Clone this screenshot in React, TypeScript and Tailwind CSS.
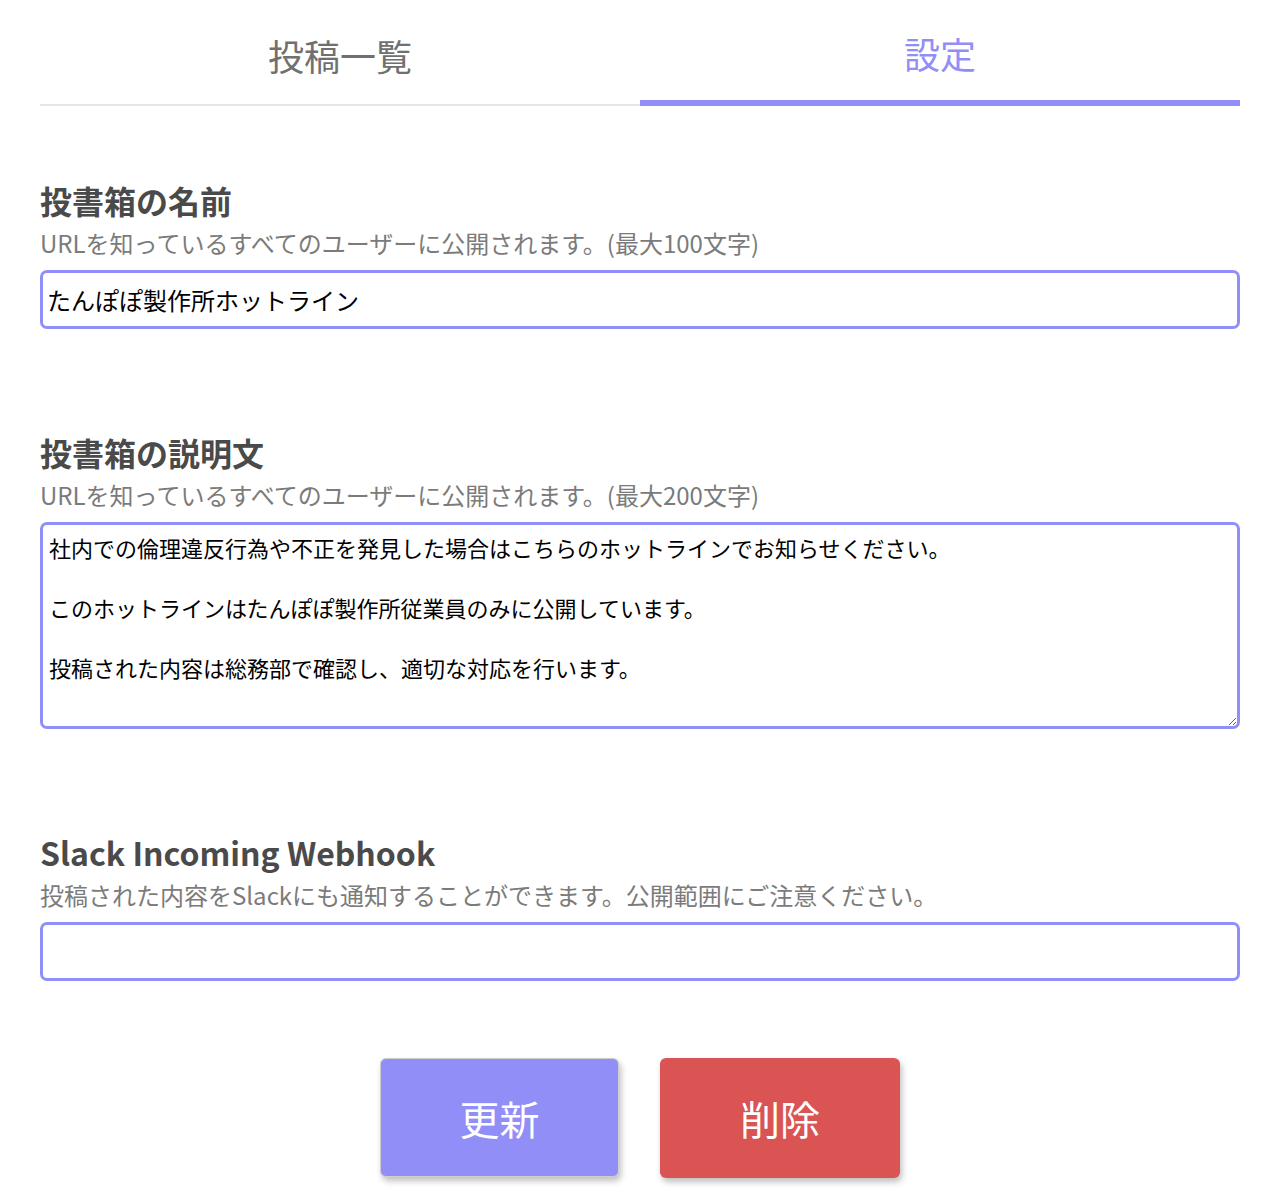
import React, { useState } from "react";

const jp = "font-['Noto_Sans_CJK_JP','Noto_Sans',sans-serif]";

const Field: React.FC<{ title: string; note: string; children: React.ReactNode }> = ({
  title,
  note,
  children,
}) => (
  <div>
    <h2 className="text-[32px] font-bold leading-[44px] text-[#4a4a4a]">{title}</h2>
    <p className="mt-[4px] text-[24px] leading-[34px] text-[#7b7b7b]">{note}</p>
    <div className="mt-[10px]">{children}</div>
  </div>
);

const App: React.FC = () => {
  const [tab, setTab] = useState<"list" | "settings">("settings");
  const [name, setName] = useState("たんぽぽ製作所ホットライン");
  const [desc, setDesc] = useState(
    "社内での倫理違反行為や不正を発見した場合はこちらのホットラインでお知らせください。\n\nこのホットラインはたんぽぽ製作所従業員のみに公開しています。\n\n投稿された内容は総務部で確認し、適切な対応を行います。",
  );
  const [hook, setHook] = useState("");

  return (
    <div className={`min-h-screen bg-white ${jp}`}>
      <div className="ml-[40px] w-[1200px]">
        {/* tabs */}
        <div className="flex">
          <button
            onClick={() => setTab("list")}
            className={`h-[106px] flex-1 pt-[6px] text-[36px] ${
              tab === "list"
                ? "border-b-[6px] border-[#928ef8] text-[#928ef8]"
                : "border-b-[2px] border-[#e6e6e6] text-[#707070]"
            }`}
          >
            投稿一覧
          </button>
          <button
            onClick={() => setTab("settings")}
            className={`h-[106px] flex-1 pt-[6px] text-[36px] ${
              tab === "settings"
                ? "border-b-[6px] border-[#928ef8] text-[#928ef8]"
                : "border-b-[2px] border-[#e6e6e6] text-[#707070]"
            }`}
          >
            設定
          </button>
        </div>

        <div className="mt-[72px] flex flex-col gap-[101px]">
          <Field title="投書箱の名前" note="URLを知っているすべてのユーザーに公開されます。(最大100文字)">
            <input
              value={name}
              onChange={(e) => setName(e.target.value)}
              className="block h-[59px] w-full rounded-[7px] border-[3px] border-[#928ef8] px-[4px] text-[24px] text-black outline-none"
            />
          </Field>

          <Field title="投書箱の説明文" note="URLを知っているすべてのユーザーに公開されます。(最大200文字)">
            <textarea
              value={desc}
              onChange={(e) => setDesc(e.target.value)}
              className="block h-[207px] w-full rounded-[7px] border-[3px] border-[#928ef8] px-[6px] pt-[7px] text-[22px] leading-[30px] text-black outline-none"
            />
          </Field>

          <Field
            title="Slack Incoming Webhook"
            note="投稿された内容をSlackにも通知することができます。公開範囲にご注意ください。"
          >
            <input
              value={hook}
              onChange={(e) => setHook(e.target.value)}
              className="block h-[59px] w-full rounded-[7px] border-[3px] border-[#928ef8] px-[4px] text-[24px] text-black outline-none"
            />
          </Field>
        </div>

        <div className="mt-[77px] flex justify-center gap-[41px] pb-6">
          <button className="h-[119px] w-[239px] rounded-[6px] border border-[#cfcfcf] bg-[#928ef8] text-[40px] text-white shadow-[2px_4px_6px_rgba(0,0,0,0.25)]">
            更新
          </button>
          <button className="h-[120px] w-[240px] rounded-[6px] bg-[#d95452] text-[40px] text-white shadow-[2px_4px_6px_rgba(0,0,0,0.25)]">
            削除
          </button>
        </div>
      </div>
    </div>
  );
};

export default App;
